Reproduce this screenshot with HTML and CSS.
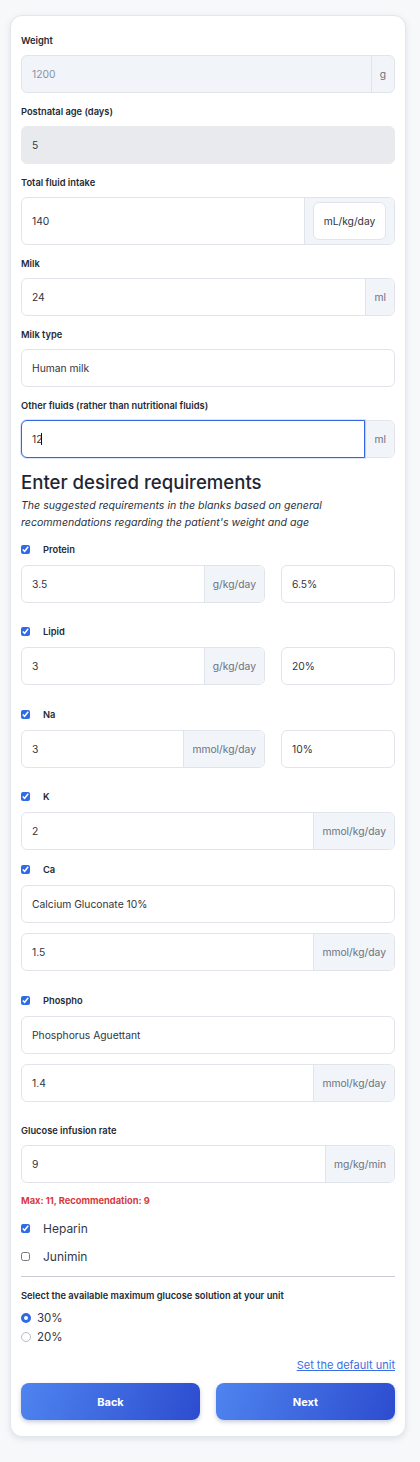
FILE: index.html
```html
<!DOCTYPE html>
<html lang="en">
<head>
<meta charset="utf-8">
<title>Requirements</title>
<link rel="stylesheet" href="styles.css">
</head>
<body>
<div class="page">
  <form class="card">
    <div class="field">
      <label class="label">Weight</label>
      <div class="group disabled">
        <input class="control" value="1200" disabled>
        <span class="addon">g</span>
      </div>
    </div>

    <div class="field">
      <label class="label">Postnatal age (days)</label>
      <div class="group readonly">
        <input class="control" value="5" readonly>
      </div>
    </div>

    <div class="field">
      <label class="label">Total fluid intake</label>
      <div class="group tall">
        <input class="control" value="140">
        <span class="addon addon-pad"><span class="unit-btn">mL/kg/day</span></span>
      </div>
    </div>

    <div class="field">
      <label class="label">Milk</label>
      <div class="group">
        <input class="control" value="24">
        <span class="addon">ml</span>
      </div>
    </div>

    <div class="field">
      <label class="label">Milk type</label>
      <div class="group">
        <input class="control" value="Human milk">
      </div>
    </div>

    <div class="field">
      <label class="label">Other fluids (rather than nutritional fluids)</label>
      <div class="group">
        <div class="focus-wrap">
          <input class="control focused" value="12">
          <span class="caret"></span>
        </div>
        <span class="addon">ml</span>
      </div>
    </div>

    <h2 class="heading">Enter desired requirements</h2>
    <p class="hint">The suggested requirements in the blanks based on general recommendations regarding the patient's weight and age</p>

    <div class="nutrient">
      <label class="check"><input type="checkbox" checked><span>Protein</span></label>
      <div class="pair">
        <div class="group">
          <input class="control" value="3.5">
          <span class="addon">g/kg/day</span>
        </div>
        <div class="group">
          <input class="control" value="6.5%">
        </div>
      </div>
    </div>

    <div class="nutrient">
      <label class="check"><input type="checkbox" checked><span>Lipid</span></label>
      <div class="pair">
        <div class="group">
          <input class="control" value="3">
          <span class="addon">g/kg/day</span>
        </div>
        <div class="group">
          <input class="control" value="20%">
        </div>
      </div>
    </div>

    <div class="nutrient">
      <label class="check"><input type="checkbox" checked><span>Na</span></label>
      <div class="pair">
        <div class="group">
          <input class="control" value="3">
          <span class="addon">mmol/kg/day</span>
        </div>
        <div class="group">
          <input class="control" value="10%">
        </div>
      </div>
    </div>

    <div class="nutrient compact">
      <label class="check"><input type="checkbox" checked><span>K</span></label>
      <div class="group">
        <input class="control" value="2">
        <span class="addon">mmol/kg/day</span>
      </div>
    </div>

    <div class="nutrient">
      <label class="check"><input type="checkbox" checked><span>Ca</span></label>
      <div class="group stack">
        <input class="control" value="Calcium Gluconate 10%">
      </div>
      <div class="group">
        <input class="control" value="1.5">
        <span class="addon">mmol/kg/day</span>
      </div>
    </div>

    <div class="nutrient">
      <label class="check"><input type="checkbox" checked><span>Phospho</span></label>
      <div class="group stack">
        <input class="control" value="Phosphorus Aguettant">
      </div>
      <div class="group">
        <input class="control" value="1.4">
        <span class="addon">mmol/kg/day</span>
      </div>
    </div>

    <div class="field gir">
      <label class="label">Glucose infusion rate</label>
      <div class="group">
        <input class="control" value="9">
        <span class="addon">mg/kg/min</span>
      </div>
    </div>
    <p class="warn">Max: 11, Recommendation: 9</p>

    <label class="check big"><input type="checkbox" checked><span>Heparin</span></label>
    <label class="check big"><input type="checkbox"><span>Junimin</span></label>

    <hr class="rule">

    <p class="label">Select the available maximum glucose solution at your unit</p>
    <label class="radio"><input type="radio" name="glu" checked><span>30%</span></label>
    <label class="radio"><input type="radio" name="glu"><span>20%</span></label>

    <div class="link-row"><a href="#" class="link">Set the default unit</a></div>

    <div class="actions">
      <button type="button" class="btn">Back</button>
      <button type="button" class="btn">Next</button>
    </div>
  </form>
</div>
</body>
</html>
```

FILE: styles.css
```css
* { box-sizing: border-box; }
html, body {
  margin: 0;
  padding: 0;
  background: #f7f8fa;
  font-family: Inter, "Noto Sans", "Liberation Sans", sans-serif;
  color: #2a2f3a;
}
.page {
  padding: 15px 0 24px 10px;
}
.card {
  width: 396px;
  background: #ffffff;
  border: 1px solid #e3e6ea;
  border-radius: 12px;
  box-shadow: 0 2px 6px rgba(20, 30, 50, 0.10);
  padding: 18px 10px 16px 10px;
  display: flex;
  flex-direction: column;
}
.field {
  display: flex;
  flex-direction: column;
  margin-bottom: 12px;
}
.label {
  display: block;
  margin: 0 0 7px 0;
  font-size: 9.3px;
  line-height: 14px;
  font-weight: 600;
  color: #252a34;
}
.group {
  display: flex;
  align-items: stretch;
  height: 38px;
  border: 1px solid #e1e5eb;
  border-radius: 6px;
  background: #ffffff;
  overflow: visible;
}
.group.tall { height: 48px; }
.control {
  flex: 1 1 auto;
  min-width: 0;
  width: 100%;
  border: 0;
  background: transparent;
  font: inherit;
  font-size: 10.3px;
  color: #30353e;
  padding: 0 10px;
  outline: none;
  border-radius: 6px;
}
.group.disabled { background: #f1f4f9; }
.group.disabled .control { color: #8a929e; }
.group.readonly { background: #e9eaed; border-color: #e9eaed; }
.addon {
  flex: 0 0 auto;
  display: flex;
  align-items: center;
  padding: 0 8px;
  background: #f1f4f9;
  border-left: 1px solid #e1e5eb;
  border-radius: 0 6px 6px 0;
  font-size: 10.3px;
  color: #6b7380;
}
.addon-pad { padding: 4px 8px; }
.unit-btn {
  display: flex;
  align-items: center;
  justify-content: center;
  height: 100%;
  width: 73px;
  background: #ffffff;
  border: 1px solid #e1e5eb;
  border-radius: 6px;
  color: #30353e;
  font-size: 10.3px;
}
.focus-wrap {
  flex: 1 1 auto;
  position: relative;
  display: flex;
  margin: -1px 0 -1px -1px;
}
.control.focused {
  border: 1px solid #3567e3;
  border-radius: 6px 0 0 6px;
  box-shadow: 0 0 0 1px rgba(53, 103, 227, 0.18);
  padding-left: 10px;
}
.caret {
  position: absolute;
  left: 20px;
  top: 13px;
  width: 1px;
  height: 12px;
  background: #111111;
}
.heading {
  margin: 0;
  font-size: 18.6px;
  line-height: 24px;
  font-weight: 500;
  color: #1f2633;
}
.hint {
  margin: 3px 0 11px 0;
  font-size: 10.6px;
  line-height: 17px;
  font-style: italic;
  color: #2c323c;
}
.nutrient {
  display: flex;
  flex-direction: column;
  margin-bottom: 22px;
}
.nutrient.compact { margin-bottom: 12px; }
.nutrient .stack { margin-bottom: 10.5px; }
.check {
  display: flex;
  align-items: center;
  height: 14px;
  margin-bottom: 8.5px;
  font-size: 9.3px;
  font-weight: 600;
  color: #252a34;
}
.check input {
  width: 9px;
  height: 9px;
  margin: 0 13px 0 0;
  accent-color: #2f6be6;
}
.pair {
  display: grid;
  grid-template-columns: 244px 1fr;
  gap: 16px;
}
.gir { margin-bottom: 11px; }
.warn {
  margin: 0 0 12px 0;
  font-size: 9.3px;
  line-height: 14px;
  font-weight: 700;
  color: #d8393f;
}
.check.big {
  font-size: 12px;
  font-weight: 400;
  color: #323845;
  height: 16px;
  margin-bottom: 12px;
}
.rule {
  width: 100%;
  margin: 0 0 12px 0;
  border: 0;
  border-top: 1px solid #c9ccd2;
}
.radio {
  display: flex;
  align-items: center;
  height: 16px;
  margin-bottom: 2.5px;
  font-size: 11.5px;
  color: #323845;
}
.radio input {
  appearance: none;
  -webkit-appearance: none;
  width: 10px;
  height: 10px;
  margin: 0 6px 0 0;
  border: 1px solid #b8bdc5;
  border-radius: 50%;
  background: #ffffff;
}
.radio input:checked {
  border: 3px solid #2f6be6;
}
.link-row {
  display: flex;
  justify-content: flex-end;
  margin: 11px 0 11px 0;
}
.link {
  font-size: 11px;
  line-height: 14px;
  color: #3a6ee2;
  text-decoration: underline;
}
.actions {
  display: grid;
  grid-template-columns: 1fr 1fr;
  gap: 16px;
}
.btn {
  height: 37px;
  border: 0;
  border-radius: 8px;
  background: linear-gradient(110deg, #4f84ef 0%, #2c4ccf 100%);
  box-shadow: 0 2px 4px rgba(30, 50, 120, 0.25);
  color: #ffffff;
  font: inherit;
  font-size: 11px;
  font-weight: 700;
}
```
